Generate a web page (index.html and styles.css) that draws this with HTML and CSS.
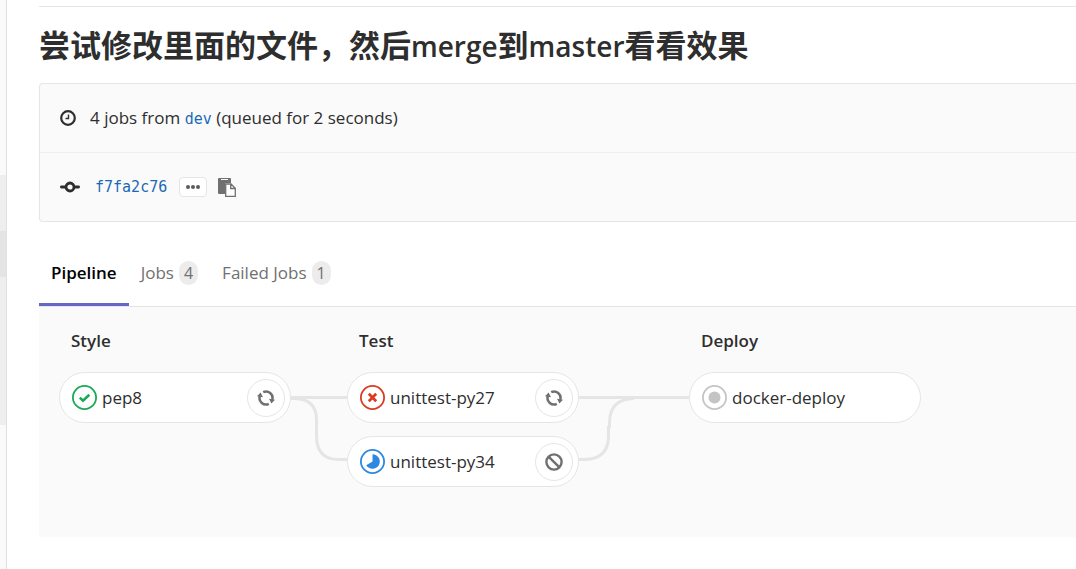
FILE: index.html
```html
<!DOCTYPE html>
<html lang="zh-CN">

<head>
    <meta charset="UTF-8">
    <meta name="viewport" content="width=device-width, initial-scale=1.0">
    <title>Pipeline</title>
    <link rel="stylesheet" href="styles.css">
</head>

<body>
    <div class="layout">
        <div class="sidebar">
            <div class="sidebar-group">
                <div class="sidebar-active"></div>
            </div>
        </div>

        <main class="content">
            <h1 class="commit-title">尝试修改里面的文件，然后<span class="latin">merge</span>到<span class="latin">master</span>看看效果</h1>

            <div class="info-box">
                <div class="info-row">
                    <svg class="icon-clock" width="16" height="16" viewBox="0 0 16 16" fill="none" stroke="#2e2e2e">
                        <circle cx="8" cy="8" r="6.8" stroke-width="2.2" />
                        <path d="M8.5 4.5V8.5H5.5" stroke-width="1.4" />
                    </svg>
                    <span>4 jobs from <a class="ref-name" href="#">dev</a> (queued for 2 seconds)</span>
                </div>
                <div class="info-row">
                    <svg class="icon-commit" width="20" height="12" viewBox="0 0 20 12" fill="none" stroke="#2e2e2e" stroke-width="2.8">
                        <circle cx="10" cy="6" r="4" />
                        <path d="M1.4 6H5.5M14.5 6H18.6" stroke-linecap="round" />
                    </svg>
                    <a class="commit-sha" href="#">f7fa2c76</a>
                    <button class="expander" type="button" aria-label="Toggle commit description">
                        <svg width="14" height="4" viewBox="0 0 14 4" fill="#5c5c5c">
                            <circle cx="2" cy="2" r="2" />
                            <circle cx="7" cy="2" r="2" />
                            <circle cx="12" cy="2" r="2" />
                        </svg>
                    </button>
                    <button class="clipboard" type="button" aria-label="Copy commit SHA">
                        <svg width="18" height="19" viewBox="0 0 18 19">
                            <path d="M1 0H12Q13 0 13 1V5H8Q7 5 7 6V16H1Q0 16 0 15V1Q0 0 1 0Z" fill="#707070" />
                            <path d="M3 1.5H10" stroke="#fafafa" stroke-width="1" />
                            <path d="M7.7 6H13L17.3 10.3V18.3H7.7ZM12.7 6V10.5H17" fill="#fff" stroke="#707070" stroke-width="1.3" />
                        </svg>
                    </button>
                </div>
            </div>

            <nav class="tabs">
                <a class="tab active" href="#">Pipeline</a>
                <a class="tab" href="#">Jobs <span class="badge">4</span></a>
                <a class="tab" href="#">Failed Jobs <span class="badge">1</span></a>
            </nav>

            <div class="graph">
                <section class="stage">
                    <h2 class="stage-name">Style</h2>
                    <div class="job">
                        <a class="job-link" href="#">
                            <svg width="25" height="25" viewBox="0 0 25 25" fill="none" stroke="#1aaa55">
                                <circle cx="12.5" cy="12.5" r="11.6" stroke-width="1.8" />
                                <path d="M7.8 12.6L11 15.6L17.3 9.7" stroke-width="2.6" />
                            </svg>
                            pep8
                        </a>
                        <button class="job-action" type="button" aria-label="Retry pep8">
                            <svg width="18" height="16" viewBox="0 0 18 16" fill="none" stroke="#707070" stroke-width="2.5">
                                <path d="M6.2 2.2A6.4 6.4 0 0 1 15.2 9.8M11.8 13.8A6.4 6.4 0 0 1 2.8 6.2" />
                                <path d="M0 6.2L3.6 2.4L6 7.2ZM18 9.8L14.4 13.6L12 8.8Z" fill="#707070" stroke="none" />
                            </svg>
                        </button>
                    </div>
                </section>

                <svg class="connector" width="56" height="70" viewBox="0 0 56 70" fill="none" stroke="#e5e5e5" stroke-width="3">
                    <path d="M0 3.5H56M0 4.5H4Q25.5 5 25.5 26V42Q25.5 65.5 48 65.5H56" />
                </svg>

                <section class="stage">
                    <h2 class="stage-name">Test</h2>
                    <div class="job">
                        <a class="job-link" href="#">
                            <svg width="25" height="25" viewBox="0 0 25 25" fill="none" stroke="#db3b21">
                                <circle cx="12.5" cy="12.5" r="11.6" stroke-width="1.8" />
                                <path d="M8.8 8.8L16.2 16.2M16.2 8.8L8.8 16.2" stroke-width="2.8" />
                            </svg>
                            unittest-py27
                        </a>
                        <button class="job-action" type="button" aria-label="Retry unittest-py27">
                            <svg width="18" height="16" viewBox="0 0 18 16" fill="none" stroke="#707070" stroke-width="2.5">
                                <path d="M6.2 2.2A6.4 6.4 0 0 1 15.2 9.8M11.8 13.8A6.4 6.4 0 0 1 2.8 6.2" />
                                <path d="M0 6.2L3.6 2.4L6 7.2ZM18 9.8L14.4 13.6L12 8.8Z" fill="#707070" stroke="none" />
                            </svg>
                        </button>
                    </div>
                    <div class="job">
                        <a class="job-link" href="#">
                            <svg width="25" height="25" viewBox="0 0 25 25" fill="none" stroke="#2e87e0">
                                <circle cx="12.5" cy="12.5" r="11.6" stroke-width="1.8" />
                                <path d="M12.5 5.2A7.3 7.3 0 1 1 6.2 16.2L12.5 12.5Z" fill="#2e87e0" stroke="none" />
                            </svg>
                            unittest-py34
                        </a>
                        <button class="job-action" type="button" aria-label="Cancel unittest-py34">
                            <svg width="18" height="18" viewBox="0 0 18 18" fill="none" stroke="#707070" stroke-width="2.4">
                                <circle cx="9" cy="9" r="7.6" />
                                <path d="M3.8 3.8L14.2 14.2" />
                            </svg>
                        </button>
                    </div>
                </section>

                <svg class="connector" width="110" height="70" viewBox="0 0 110 70" fill="none" stroke="#e5e5e5" stroke-width="3">
                    <path d="M0 3.5H110M0 65.5H6Q29.5 65 29.5 42V32M30.5 34V28Q31 5 55 4.5" />
                </svg>

                <section class="stage">
                    <h2 class="stage-name">Deploy</h2>
                    <div class="job">
                        <a class="job-link" href="#">
                            <svg width="25" height="25" viewBox="0 0 25 25" fill="none" stroke="#c4c4c4">
                                <circle cx="12.5" cy="12.5" r="11.6" stroke-width="1.8" />
                                <circle cx="12.5" cy="12.5" r="6" fill="#c4c4c4" stroke="none" />
                            </svg>
                            docker-deploy
                        </a>
                    </div>
                </section>
            </div>
        </main>
    </div>
</body>

</html>
```
FILE: styles.css
```css
* {
    box-sizing: border-box;
}

body {
    margin: 0;
    font-family: "Open Sans", "Noto Sans CJK SC", sans-serif;
    font-size: 17px;
    line-height: 24px;
    color: #2e2e2e;
    background-color: #fff;
}

a {
    color: #1b69b6;
    text-decoration: none;
}

button {
    display: flex;
    align-items: center;
    justify-content: center;
    padding: 0;
    cursor: pointer;
}

svg {
    flex: none;
}

.layout {
    display: flex;
    min-height: 100vh;
}

/* collapsed sidebar */
.sidebar {
    flex: none;
    width: 7px;
    padding-top: 175px;
    background-color: #fafafa;
    border-right: 1px solid #e1e1e1;
}

.sidebar-group {
    height: 250px;
    padding-top: 56px;
    background-color: #eee;
}

.sidebar-active {
    height: 46px;
    background-color: #e4e4e4;
}

.content {
    flex: 1;
    min-width: 0;
    padding: 6px 0 32px 32px;
}

.commit-title {
    margin: 0;
    padding: 18px 0 17px;
    border-top: 1px solid #e5e5e5;
    font-size: 31px;
    font-weight: 600;
    line-height: 40px;
}

.latin {
    font-size: 28px;
}

.info-box {
    border: 1px solid #e5e5e5;
    border-right: none;
    border-radius: 4px 0 0 4px;
    background-color: #fafafa;
}

.info-row {
    display: flex;
    align-items: center;
    height: 68px;
    padding: 0 20px;
}

.info-row + .info-row {
    height: 69px;
    border-top: 1px solid #eee;
}

.icon-clock {
    margin-right: 14px;
}

.icon-commit {
    margin-right: 15px;
}

.ref-name,
.commit-sha {
    font-family: "DejaVu Sans Mono", monospace;
    font-size: 15px;
}

.commit-sha {
    margin-right: 12px;
}

.expander {
    width: 28px;
    height: 20px;
    margin-right: 11px;
    border: 1px solid #e5e5e5;
    border-radius: 4px;
    background-color: #fff;
}

.clipboard {
    border: none;
    background: none;
}

.tabs {
    display: flex;
    padding-top: 32px;
    border-bottom: 1px solid #e5e5e5;
}

.tab {
    display: flex;
    align-items: center;
    gap: 5px;
    height: 52px;
    padding: 0 12px 15px;
    color: #707070;
}

.tab.active {
    padding-bottom: 12px;
    border-bottom: 3px solid #6666c4;
    font-weight: 600;
    color: #000;
}

.badge {
    padding: 0 5px;
    border-radius: 12px;
    background-color: #ececec;
    font-size: 16px;
}

.graph {
    display: flex;
    align-items: flex-start;
    min-height: 230px;
    padding: 20px;
    background-color: #fafafa;
}

.stage {
    flex: none;
    width: 232px;
}

.stage-name {
    margin: 0 0 19px;
    padding: 2px 12px 0;
    font-size: 17px;
    font-weight: 600;
    line-height: 24px;
}

.job {
    display: flex;
    align-items: center;
    height: 51px;
    margin-bottom: 13px;
    padding: 0 5px 0 12px;
    border: 1px solid #e5e5e5;
    border-radius: 26px;
    background-color: #fff;
}

.job-link {
    display: flex;
    flex: 1;
    align-items: center;
    gap: 5px;
    color: #2e2e2e;
}

.job-action {
    width: 38px;
    height: 38px;
    border: 1px solid #e5e5e5;
    border-radius: 50%;
    background-color: #fff;
}

.connector {
    margin-top: 67px;
}
```
